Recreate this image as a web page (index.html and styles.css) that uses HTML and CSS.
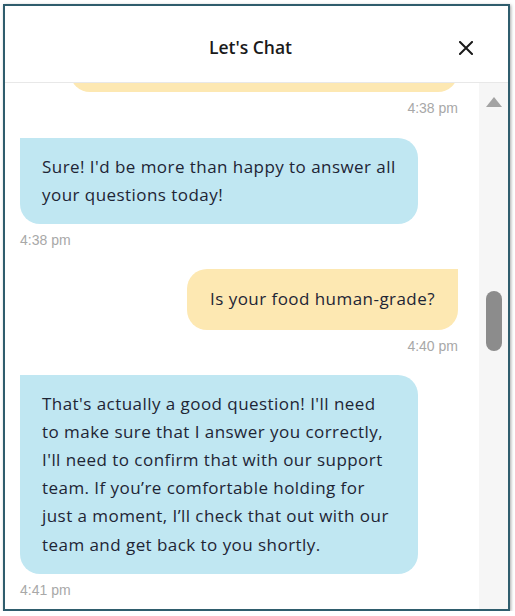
FILE: index.html
```html
<!DOCTYPE html>
<html lang="en">
<head>
<meta charset="utf-8">
<title>Let's Chat</title>
<link rel="stylesheet" href="styles.css">
</head>
<body>
<div class="frame">
  <header class="header">
    <h1 class="title">Let's Chat</h1>
    <button class="close" aria-label="Close">
      <svg width="14" height="14" viewBox="0 0 14 14"><path d="M1 1 L13 13 M13 1 L1 13" stroke="#1a1a1a" stroke-width="2" stroke-linecap="square"/></svg>
    </button>
  </header>
  <div class="body">
    <div class="messages">
      <div class="group user first">
        <div class="bubble user-bubble partial" aria-hidden="true"></div>
        <div class="time">4:38 pm</div>
      </div>
      <div class="group agent">
        <div class="bubble agent-bubble">Sure! I'd be more than happy to answer all your questions today!</div>
        <div class="time">4:38 pm</div>
      </div>
      <div class="group user">
        <div class="bubble user-bubble">Is your food human-grade?</div>
        <div class="time">4:40 pm</div>
      </div>
      <div class="group agent">
        <div class="bubble agent-bubble">That's actually a good question! I'll need to make sure that I answer you correctly, I'll need to confirm that with our support team. If you’re comfortable holding for just a moment, I’ll check that out with our team and get back to you shortly.</div>
        <div class="time">4:41 pm</div>
      </div>
    </div>
    <div class="scrollbar">
      <div class="arrow"></div>
      <div class="track"><div class="thumb"></div></div>
    </div>
  </div>
</div>
</body>
</html>
```

FILE: styles.css
```css
html, body {
  margin: 0;
  padding: 0;
  background: #ffffff;
}
body {
  padding: 4px 0 0 3px;
  font-family: "Open Sans", "Noto Sans", sans-serif;
}
.frame {
  width: 503px;
  height: 603px;
  border: 2px solid #2f5d6d;
  box-shadow: 1px 1px 3px rgba(0, 0, 0, 0.35);
  background: #ffffff;
  display: flex;
  flex-direction: column;
  overflow: hidden;
}
.header {
  height: 77px;
  box-sizing: border-box;
  padding-top: 5px;
  flex: none;
  border-bottom: 1px solid #e8e8e8;
  display: flex;
  align-items: center;
  justify-content: center;
  position: relative;
}
.title {
  margin: 0 0 0 -12px;
  font-size: 17.5px;
  font-weight: 600;
  color: #1a1a1a;
}
.close {
  position: absolute;
  right: 35px;
  top: 35px;
  width: 14px;
  height: 14px;
  padding: 0;
  border: 0;
  background: none;
  display: block;
}
.close svg { display: block; }
.body {
  flex: 1;
  display: flex;
  min-height: 0;
}
.messages {
  flex: 1;
  overflow: hidden;
  padding: 0 21px 0 15px;
  display: flex;
  flex-direction: column;
  gap: 22px;
}
.group {
  display: flex;
  flex-direction: column;
}
.group.user { align-items: flex-end; }
.group.agent { align-items: flex-start; }
.group.first { margin-top: -51px; }
.group.first + .group { margin-top: 1px; }
.partial {
  width: 388px;
  height: 60px;
}
.bubble {
  font-size: 17px;
  letter-spacing: 0.45px;
  line-height: 28.2px;
  color: #1e2535;
  box-sizing: border-box;
}
.agent-bubble {
  background: #c0e7f2;
  width: 398px;
  padding: 15px 22px 15px 22px;
  border-radius: 0 20px 20px 20px;
}
.user-bubble {
  background: #fde8b2;
  padding: 16px 23px;
  border-radius: 20px 0 20px 20px;
}
.time {
  margin-top: 9px;
  font-family: "Liberation Sans", Arial, sans-serif;
  font-size: 14px;
  line-height: 14px;
  color: #a8a8a8;
}
.scrollbar {
  width: 29px;
  flex: none;
  background: #f6f6f6;
  display: flex;
  flex-direction: column;
  align-items: center;
  padding-top: 14px;
}
.arrow {
  width: 0;
  height: 0;
  border-left: 8px solid transparent;
  border-right: 8px solid transparent;
  border-bottom: 10px solid #a3a3a3;
}
.track {
  padding-top: 184px;
}
.thumb {
  width: 16px;
  height: 60px;
  border-radius: 8px;
  background: #8c8c8c;
}
```
